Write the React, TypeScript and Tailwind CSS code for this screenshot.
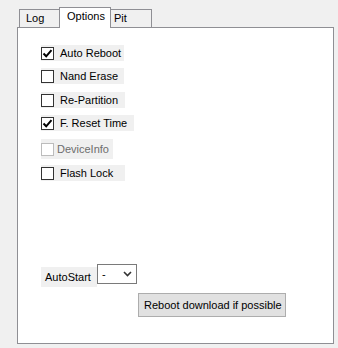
import React from 'react';

const font = { fontFamily: '"Liberation Sans", Arial, sans-serif' };

const Check = ({ checked, disabled }: { checked?: boolean; disabled?: boolean }) => (
  <div
    className={`w-[13px] h-[13px] shrink-0 border bg-white flex items-center justify-center ${
      disabled ? 'border-[#bcbcbc]' : 'border-[#333333]'
    }`}
  >
    {checked && (
      <svg width="11" height="11" viewBox="0 0 11 11">
        <path d="M1.5 5.5 L4.2 8.3 L9.5 2.2" fill="none" stroke="#000" strokeWidth="2" />
      </svg>
    )}
  </div>
);

interface RowProps {
  label: string;
  width: string;
  checked?: boolean;
  disabled?: boolean;
  className?: string;
}

const Row: React.FC<RowProps> = ({ label, width, checked, disabled, className }) => (
  <div className={`flex items-center bg-[#f0f0f0] ${width} ${className ?? ''}`}>
    <Check checked={checked} disabled={disabled} />
    <span
      className={`text-[11px] leading-none whitespace-nowrap ${
        disabled ? 'ml-[3px] text-[#6d6d6d]' : 'ml-[6px] text-black'
      }`}
    >
      {label}
    </span>
  </div>
);

export default function App() {
  return (
    <div className="w-[338px] h-[348px] bg-[#f0f0f0] pl-[17px] pt-[7px]" style={font}>
      {/* tabs */}
      <div className="flex items-end h-[20px] pl-[2px]">
        <div className="w-[40px] h-[18px] border-t border-l border-[#8f8f94] bg-[#f0f0f0] text-[11px] text-black pl-[6px] pt-[3px] leading-none">
          Log
        </div>
        <div className="relative z-10 w-[52px] h-[21px] -mb-px border-t border-l border-r border-[#8f8f94] bg-white text-[11px] text-black pl-[7px] pt-[3px] leading-none">
          Options
        </div>
        <div className="w-[41px] h-[18px] border-t border-r border-[#8f8f94] bg-[#f0f0f0] text-[11px] text-black pl-[3px] pt-[3px] leading-none">
          Pit
        </div>
      </div>

      {/* panel */}
      <div className="w-[317px] h-[317px] border border-[#8f8f94] bg-white pl-[23px] flex flex-col">
        <Row label="Auto Reboot" width="w-[83px]" checked className="h-[16px] mt-[17px]" />
        <Row label="Nand Erase" width="w-[83px]" className="h-[16px] mt-[7px]" />
        <Row label="Re-Partition" width="w-[84px]" className="h-[16px] mt-[8px]" />
        <Row label="F. Reset Time" width="w-[93px]" checked className="h-[16px] mt-[7px]" />
        <Row label="DeviceInfo" width="w-[72px]" disabled className="h-[20px] mt-[8px]" />
        <Row label="Flash Lock" width="w-[84px]" className="h-[16px] mt-[6px]" />

        <div className="flex items-start mt-[83px]">
          <div className="w-[56px] h-[20px] mt-[3px] bg-[#f0f0f0] text-[11px] text-black pl-[4px] flex items-center leading-none">
            AutoStart
          </div>
          <div className="w-[40px] h-[20px] border border-[#7a7a7a] bg-white flex items-center justify-between pl-[4px] pr-[4px] text-[11px] text-black leading-none">
            <span>-</span>
            <svg width="9" height="6" viewBox="0 0 9 6">
              <path d="M1 1 L4.5 4.5 L8 1" fill="none" stroke="#333" strokeWidth="1.6" />
            </svg>
          </div>
        </div>

        <button className="ml-[97px] mt-[6px] w-[148px] h-[24px] border border-[#adadad] bg-[#e1e1e1] text-[11px] text-black text-left pl-[5px] leading-none">
          Reboot download if possible
        </button>
      </div>
    </div>
  );
}
